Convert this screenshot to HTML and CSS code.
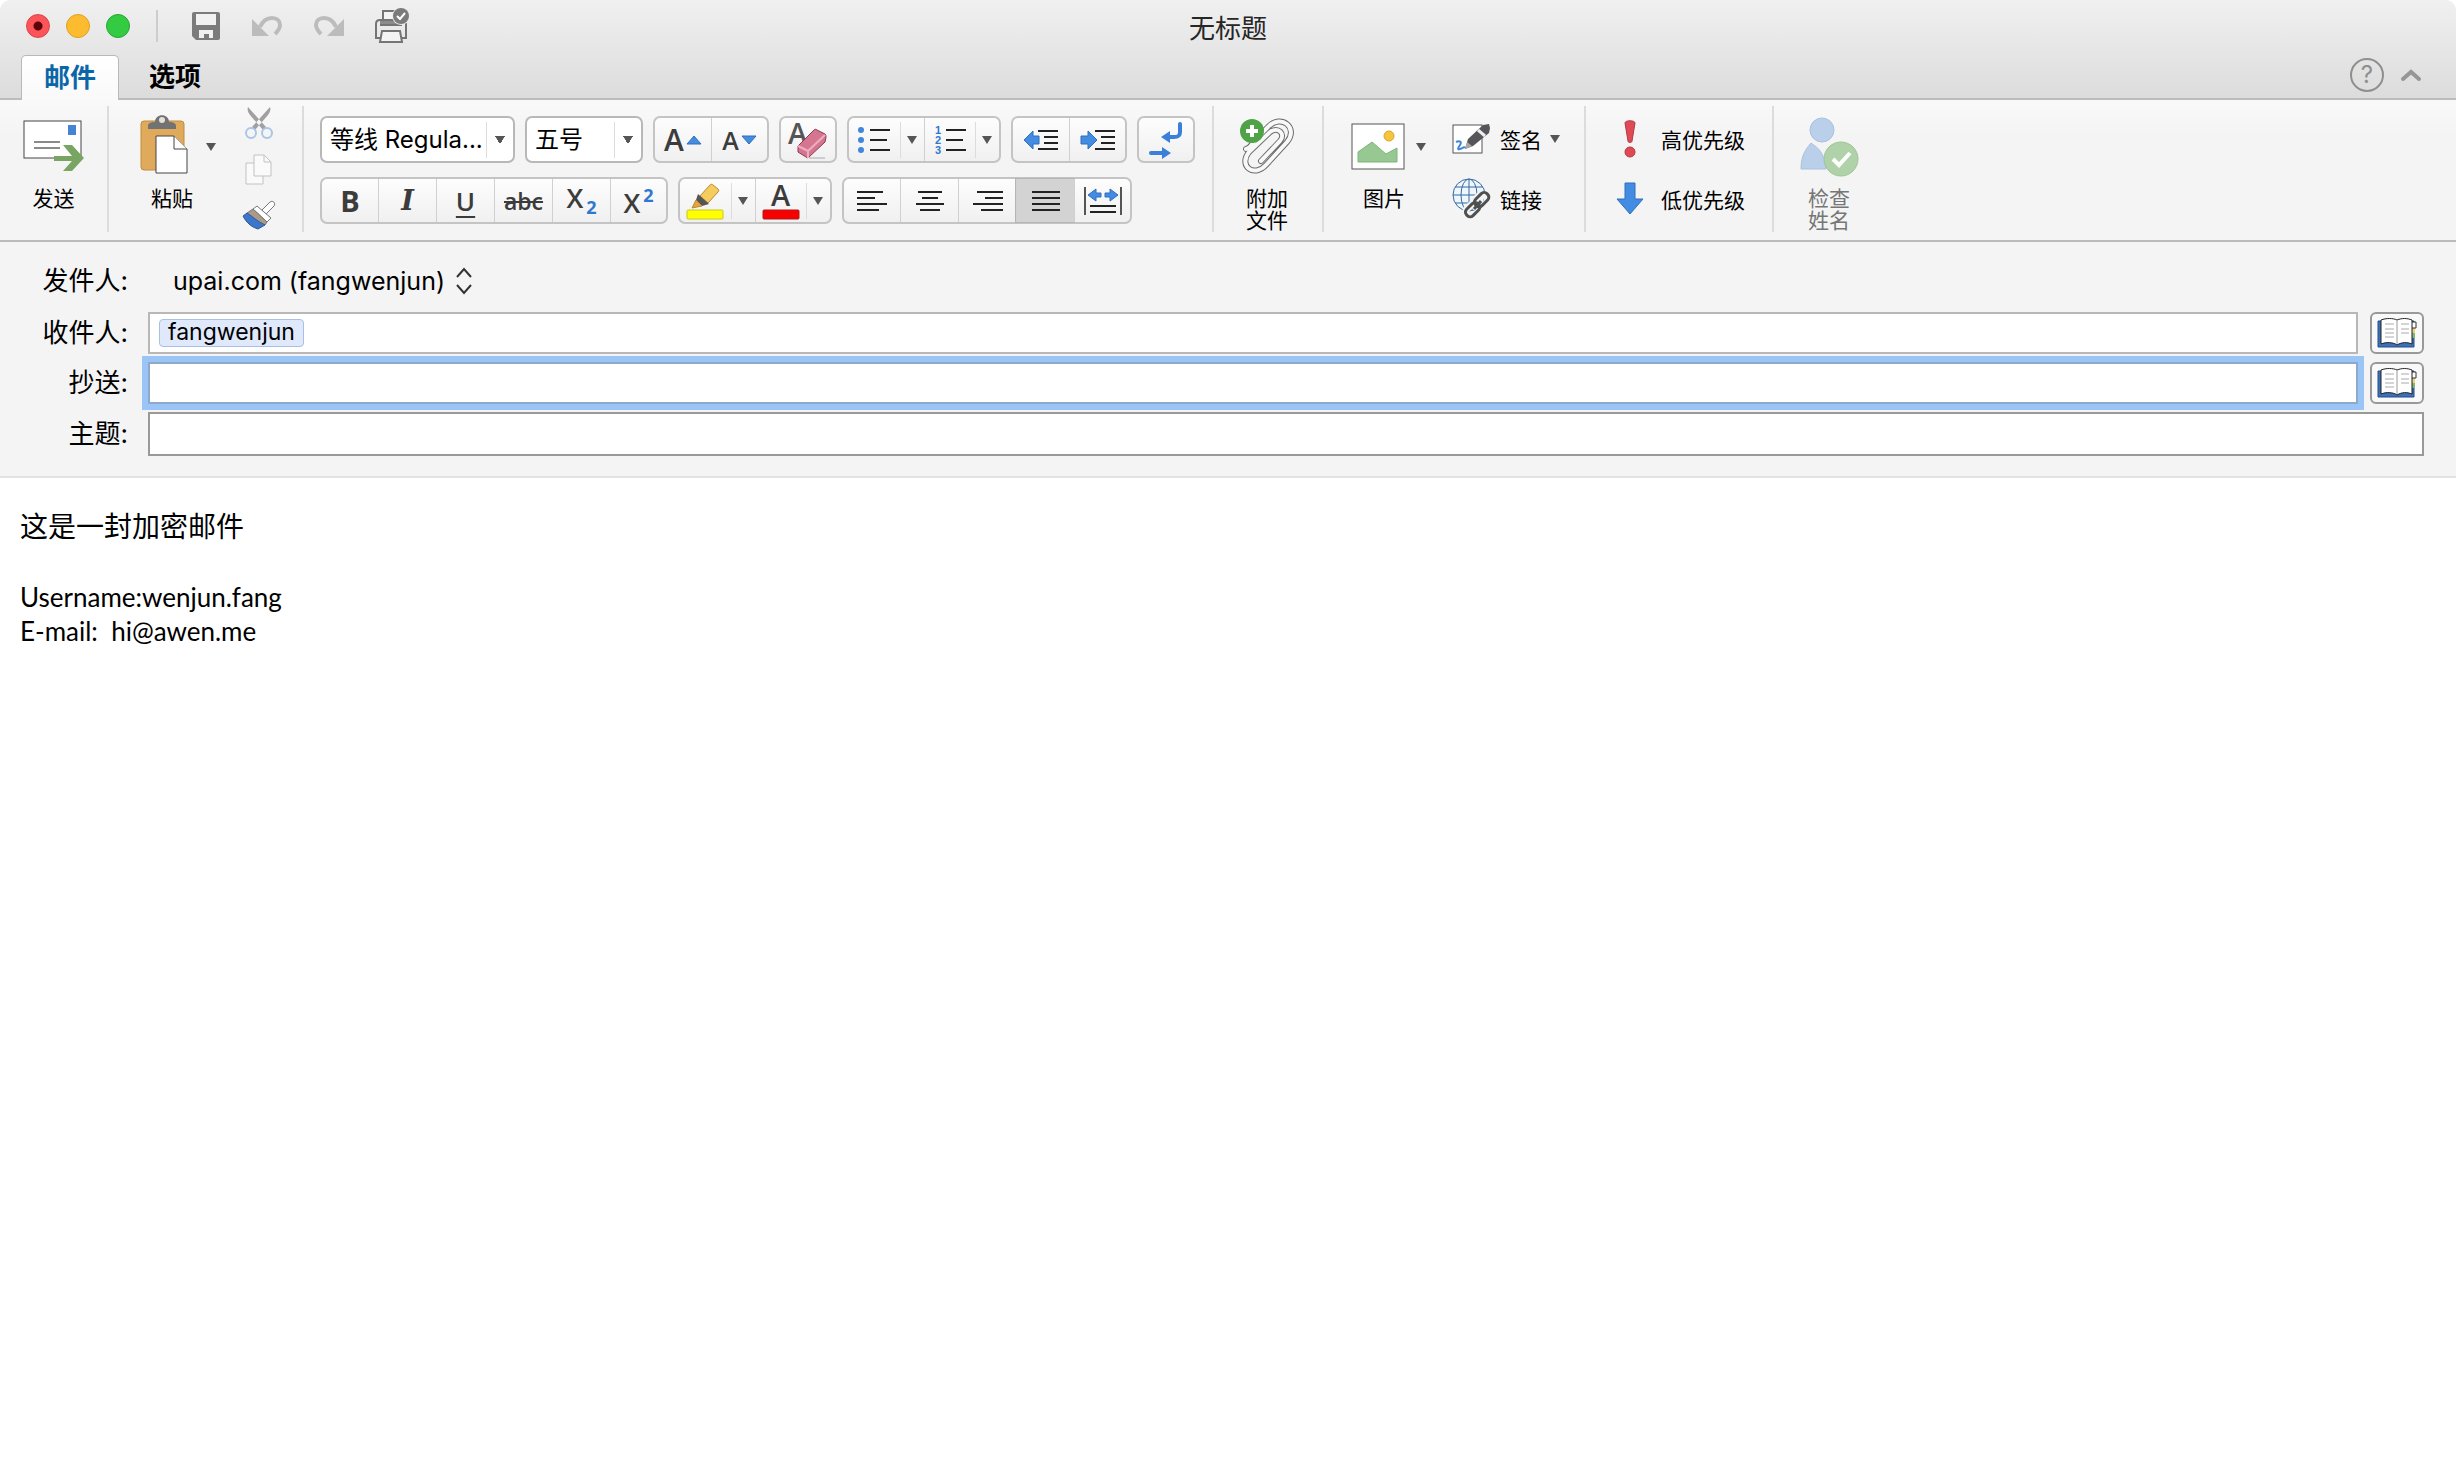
FILE: index.html
```html
<!DOCTYPE html>
<html lang="zh-CN">
<head>
<meta charset="utf-8">
<title>无标题</title>
<link rel="stylesheet" href="styles.css">
</head>
<body>
<div class="window">
<header class="chrome">
  <div class="titlebar">
    <div class="titlebar-tools">
      <div class="lights">
        <button class="light light-close" aria-label="关闭"></button>
        <button class="light light-min" aria-label="最小化"></button>
        <button class="light light-max" aria-label="最大化"></button>
      </div>
      <span class="title-sep"></span>
      <div class="quick">
        <button aria-label="保存"><svg width="30" height="30" viewBox="0 0 30 30"><path d="M3 1h24a2 2 0 0 1 2 2v24a2 2 0 0 1-2 2H5l-4-4V3a2 2 0 0 1 2-2z" fill="#7b7b7b"/><path d="M5 3h20v11H5z" fill="#f1f1f1"/><path d="M8 19h14v8h-4v-4h-5v4H8z" fill="#f1f1f1"/></svg></button>
        <button aria-label="撤销"><svg width="32" height="24" viewBox="0 0 32 24"><path d="M9 13C12 6 17 4 21 4c5 0 8 3 8 7 0 3-2 6-5 9" fill="none" stroke="#bcbcbc" stroke-width="4"/><path d="M1 5v17h17z" fill="#bcbcbc"/></svg></button>
        <button aria-label="重做"><svg width="32" height="24" viewBox="0 0 32 24"><path d="M23 13C20 6 15 4 11 4c-5 0-8 3-8 7 0 3 2 6 5 9" fill="none" stroke="#bcbcbc" stroke-width="4"/><path d="M31 5v17H14z" fill="#bcbcbc"/></svg></button>
        <button aria-label="打印"><svg width="34" height="36" viewBox="1 0 34 36"><path d="M9 12V3h14v9" fill="#f4f4f4" stroke="#757575" stroke-width="2"/><path d="M6 12h22v4H6z" fill="#8b8b8b"/><path d="M6 30H2V16c0-2 1-4 4-4h22c3 0 4 2 4 4v14h-4" fill="none" stroke="#757575" stroke-width="2"/><path d="M6 17h22" stroke="#757575" stroke-width="2"/><path d="M8 23h18l2 11H6z" fill="#f4f4f4" stroke="#757575" stroke-width="2"/><circle cx="27" cy="8" r="9" fill="#ececec"/><circle cx="27" cy="8" r="8" fill="#7b7b7b"/><path d="m23 8 3 3 5-6" fill="none" stroke="#fff" stroke-width="2"/></svg></button>
      </div>
    </div>
    <h1 class="title">无标题</h1>
    <div class="titlebar-end"></div>
  </div>
  <nav class="tabs">
    <button class="tab tab-active">邮件</button>
    <button class="tab">选项</button>
    <div class="tabs-end">
      <button class="help" aria-label="帮助">?</button>
      <button aria-label="折叠"><svg width="22" height="14" viewBox="0 0 22 14"><path d="m3 11 8-7 8 7" fill="none" stroke="#969696" stroke-width="4" stroke-linecap="round"/></svg></button>
    </div>
  </nav>
</header>

<section class="ribbon">
  <div class="group g-send">
    <button class="big"><span class="big-icon"><svg width="62" height="54" viewBox="0 0 62 54"><rect x="1" y="1" width="57" height="37" fill="#fff" stroke="#444"/><rect x="45" y="5" width="8" height="10" fill="#4484d2"/><path d="M11 22h26M11 28h26" stroke="#8a8a8a" stroke-width="2"/><path d="M31 36h18L40 25h9l12 13-12 13h-9l9-10H31z" fill="#78a662"/></svg></span><span>发送</span></button>
  </div>

  <div class="group g-paste">
    <button class="big big-left"><span class="big-icon"><svg width="48" height="60" viewBox="0 0 48 60"><rect x="1" y="7" width="43" height="49" rx="3" fill="#dfaa5c" stroke="#bd8c42"/><path d="M8 15v-3c0-3 3-4 7-4 0-9 14-9 14 0 4 0 7 1 7 4v3z" fill="#727272"/><circle cx="22" cy="6" r="3" fill="#e4e0d8"/><path d="M16 22h18l13 13v24H16z" fill="#fff" stroke="#444"/><path d="M34 22v13h13" fill="#fff" stroke="#444"/></svg></span><span>粘贴</span></button>
    <button class="drop" aria-label="粘贴选项"></button>
    <div class="clip-tools">
      <button aria-label="剪切"><svg width="30" height="34" viewBox="0 0 30 34"><path d="M4 1c-1 3 0 5 2 8l13 15 3-3zM26 1c1 3 0 5-2 8L11 24l-3-3z" fill="#a0a0a0"/><circle cx="7" cy="27" r="5" fill="none" stroke="#a9c5e8" stroke-width="2"/><circle cx="23" cy="27" r="5" fill="none" stroke="#a9c5e8" stroke-width="2"/></svg></button>
      <button aria-label="复制"><svg width="28" height="32" viewBox="0 0 28 32"><path d="M1 9h17v21H1z" fill="#fafafa" stroke="#c2c2c2"/><path d="M9 1h10l7 7v14H9z" fill="#fafafa" stroke="#c2c2c2"/><path d="M19 1v7h7" fill="none" stroke="#c2c2c2"/></svg></button>
      <button aria-label="格式刷"><svg width="34" height="30" viewBox="0 0 34 30"><path d="m20 10 8-8c3-2 6 1 4 4l-8 8z" fill="#fff" stroke="#777"/><path d="m15 6 14 12-4 4L11 9z" fill="#fff" stroke="#777"/><path d="M11 9 25 22l-2 3C16 22 12 18 5 13z" fill="#ab9a88" stroke="#777"/><path d="M5 13c6 4 11 9 18 12l-7 4C9 27 4 22 1 16z" fill="#3c77cc" stroke="#2c5aa0"/></svg></button>
    </div>
  </div>

  <div class="group g-format">
    <div class="row">
      <select class="combo combo-font" aria-label="字体"><option>等线 Regula...</option></select>
      <select class="combo combo-size" aria-label="字号"><option>五号</option></select>
      <div class="seg">
        <button class="cell grow" aria-label="增大字号"><span>A</span><svg width="16" height="10" viewBox="0 0 16 10"><path d="m1 9 7-8 7 8z" fill="#438ce2" stroke="#2f6fbd"/></svg></button>
        <button class="cell shrink" aria-label="减小字号"><span>A</span><svg width="16" height="10" viewBox="0 0 16 10"><path d="m1 1 7 8 7-8z" fill="#438ce2" stroke="#2f6fbd"/></svg></button>
      </div>
      <div class="seg">
        <button class="cell" aria-label="清除格式"><svg width="42" height="40" viewBox="0 0 42 40"><text x="1" y="24" class="glyph-a">A</text><path d="m11 26 16-16c1-1 2-1 3 0l8 4c1 1 1 2 1 3l-1 5-16 15c-1 1-2 1-3 0l-8-5z" fill="#d67590" stroke="#8b3850"/><path d="m11 26 10 5 17-16M21 31v7" fill="none" stroke="#ecafbf" stroke-width="2"/><path d="M22 38h16" stroke="#aaa"/></svg></button>
      </div>
      <div class="seg">
        <button class="cell cell-main" aria-label="项目符号"><svg width="34" height="28" viewBox="0 0 34 28"><g fill="#3f86dc"><circle cx="4" cy="4" r="3"/><circle cx="4" cy="14" r="3"/><circle cx="4" cy="24" r="3"/></g><path d="M13 4h20M13 14h17M13 24h20" stroke="#222" stroke-width="2"/></svg></button>
        <button class="cell cell-drop" aria-label="项目符号选项"></button>
        <button class="cell cell-main" aria-label="编号"><svg width="34" height="30" viewBox="0 0 34 30"><g class="digits"><text x="2" y="9">1</text><text x="2" y="19">2</text><text x="2" y="29">3</text></g><path d="M13 5h20M13 15h17M13 25h20" stroke="#222" stroke-width="2"/></svg></button>
        <button class="cell cell-drop" aria-label="编号选项"></button>
      </div>
      <div class="seg">
        <button class="cell" aria-label="减少缩进"><svg width="36" height="22" viewBox="0 0 36 22"><path d="m1 11 9-9v5h6v8h-6v5z" fill="#438ce2" stroke="#2f6fbd"/><path d="M15 2h20M21 8h14M21 14h14M15 20h20" stroke="#222" stroke-width="2"/></svg></button>
        <button class="cell" aria-label="增加缩进"><svg width="36" height="22" viewBox="0 0 36 22"><path d="m17 11-9-9v5H1v8h7v5z" fill="#438ce2" stroke="#2f6fbd"/><path d="M15 2h20M21 8h14M21 14h14M15 20h20" stroke="#222" stroke-width="2"/></svg></button>
      </div>
      <div class="seg">
        <button class="cell" aria-label="文字方向"><svg width="34" height="38" viewBox="0 0 34 38"><path d="M31 3v8c0 4-2 5-6 5h-5M2 32h13" fill="none" stroke="#3a7fd8" stroke-width="4" stroke-linecap="round"/><path d="m12 16 9-6v12zM22 32l-9-6v12z" fill="#3a7fd8"/></svg></button>
      </div>
    </div>
    <div class="row">
      <div class="seg">
        <button class="cell t-bold">B</button>
        <button class="cell t-italic">I</button>
        <button class="cell t-under">U</button>
        <button class="cell t-strike">abc</button>
        <button class="cell t-script t-sub">X<sub>2</sub></button>
        <button class="cell t-script t-sup">X<sup>2</sup></button>
      </div>
      <div class="seg">
        <button class="cell cell-main" aria-label="突出显示"><svg width="38" height="38" viewBox="0 0 38 38"><path d="M14 14 24 3c1-1 2-1 3 0l5 4c1 1 1 2 0 3L22 21z" fill="#f5cc5d" stroke="#b98a30"/><path d="m12 12 11 10-7 2-6-6z" fill="#555"/><path d="m10 18 6 6-10 2z" fill="#e8a33a" stroke="#b98a30"/><rect x="1" y="28" width="36" height="9" rx="1" fill="#ff0" stroke="#c8c820"/></svg></button>
        <button class="cell cell-drop" aria-label="突出显示选项"></button>
        <button class="cell cell-main" aria-label="字体颜色"><svg width="38" height="38" viewBox="0 0 38 38"><text x="9" y="24" class="glyph-color">A</text><rect x="1" y="28" width="36" height="9" rx="1" fill="#f60000" stroke="#b01818"/></svg></button>
        <button class="cell cell-drop" aria-label="字体颜色选项"></button>
      </div>
      <div class="seg">
        <button class="cell" aria-label="左对齐"><svg width="32" height="22" viewBox="0 0 32 22"><path d="M1 2h26M1 8h18M1 14h30M1 20h22" stroke="#222" stroke-width="2"/></svg></button>
        <button class="cell" aria-label="居中"><svg width="32" height="22" viewBox="0 0 32 22"><path d="M4 2h24M8 8h16M2 14h28M6 20h20" stroke="#222" stroke-width="2"/></svg></button>
        <button class="cell" aria-label="右对齐"><svg width="32" height="22" viewBox="0 0 32 22"><path d="M5 2h26M13 8h18M1 14h30M9 20h22" stroke="#222" stroke-width="2"/></svg></button>
        <button class="cell cell-on" aria-label="两端对齐"><svg width="32" height="22" viewBox="0 0 32 22"><path d="M2 2h28M2 8h28M2 14h28M2 20h28" stroke="#222" stroke-width="2"/></svg></button>
        <button class="cell" aria-label="分散对齐"><svg width="40" height="30" viewBox="0 0 40 30"><path d="M2 1v28M38 1v28" stroke="#555" stroke-width="2"/><path d="m5 9 8-6v4h5v4h-5v4zM35 9l-8-6v4h-5v4h5v4z" fill="#438ce2" stroke="#2f6fbd"/><path d="M7 20h26M7 26h26" stroke="#222" stroke-width="2"/></svg></button>
      </div>
    </div>
  </div>

  <div class="group g-attach">
    <button class="big"><span class="big-icon"><svg width="54" height="58" viewBox="0 0 54 58"><g fill="none" stroke-linecap="round"><path d="M6 31c5-1 6-6 11-11L28 9C41-5 59 10 47 24L26 47C14 60-2 48 9 34l21-20c8-6 16 2 10 9L21 43" stroke="#6d6d6d" stroke-width="6"/><path d="M6 31c5-1 6-6 11-11L28 9C41-5 59 10 47 24L26 47C14 60-2 48 9 34l21-20c8-6 16 2 10 9L21 43" stroke="#f8f8f8" stroke-width="4"/></g><circle cx="12" cy="13" r="12" fill="#4ea346"/><path d="M12 7v12M6 13h12" stroke="#fff" stroke-width="4"/></svg></span><span>附加<br>文件</span></button>
  </div>

  <div class="group g-insert">
    <button class="big big-left"><span class="big-icon"><svg width="54" height="48" viewBox="0 0 54 48"><rect x="1" y="1" width="52" height="45" fill="#fff" stroke="#555"/><path d="M7 39V29l14-10 14 12 11-6v14z" fill="#97c891" stroke="#7fb57a"/><circle cx="38" cy="13" r="5" fill="#f5c63c" stroke="#d7a52c"/></svg></span><span>图片</span></button>
    <button class="drop" aria-label="图片选项"></button>
    <div class="stack">
      <button class="line"><svg width="40" height="40" viewBox="0 0 40 40"><rect x="1" y="6" width="29" height="28" fill="#fff" stroke="#555"/><path d="M4 23c4-2 6 0 4 3s-3 5 0 4 4-3 5-1" fill="none" stroke="#3f86dc" stroke-width="2"/><path d="m13 30 3-10L31 6l6-1 1 4-1 5-16 13z" fill="#55555a"/><path d="m26 11 7 6" stroke="#eee" stroke-width="3"/><path d="m13 30 2-7 5 4z" fill="#aaa"/></svg>签名<span class="caret"></span></button>
      <button class="line"><svg width="40" height="42" viewBox="0 0 40 42"><g fill="#eef6ff" stroke="#376b9d"><circle cx="17" cy="17" r="16"/><ellipse cx="17" cy="17" rx="8" ry="16"/><path d="M17 1v32M1 17h32M3 9h28M3 25h28" fill="none"/></g><g fill="none" stroke="#f4f4f4" stroke-width="7"><rect x="24" y="16" width="10" height="15" rx="5" transform="rotate(45 29 23)"/><rect x="16" y="25" width="10" height="15" rx="5" transform="rotate(45 21 32)"/></g><g fill="none" stroke="#505050" stroke-width="3"><rect x="25" y="14" width="9" height="16" rx="4" transform="rotate(45 30 22)"/><rect x="16" y="24" width="9" height="16" rx="4" transform="rotate(45 21 32)"/><path d="m22 31 7-8"/></g></svg>链接</button>
    </div>
  </div>

  <div class="group g-priority">
    <div class="stack">
      <button class="line"><svg width="28" height="38" viewBox="0 0 28 38"><path d="M9 3c0-3 10-3 10 0l-3 18c0 2-4 2-4 0z" fill="#e04a55" stroke="#b03842"/><circle cx="14" cy="32" r="5" fill="#e04a55" stroke="#b03842"/></svg>高优先级</button>
      <button class="line"><svg width="28" height="34" viewBox="0 0 28 34"><path d="M9 1h10v16h8L14 32 1 17h8z" fill="#438ce2" stroke="#2f6fbd"/></svg>低优先级</button>
    </div>
  </div>

  <div class="group g-check">
    <button class="big" disabled><span class="big-icon"><svg width="58" height="60" viewBox="0 0 58 60"><g fill="#b9cfea" stroke="#a9c1e0"><circle cx="22" cy="13" r="12"/><path d="M1 52c0-14 5-20 10-26 5 4 13 7 15 26z"/></g><circle cx="41" cy="42" r="17" fill="#b0d2a8" stroke="#a0c498"/><path d="m33 42 6 6 11-12" fill="none" stroke="#fff" stroke-width="4"/></svg></span><span>检查<br>姓名</span></button>
  </div>
</section>

<form class="fields">
  <div class="field field-from">
    <label for="from">发件人:</label>
    <select id="from" class="from"><option>upai.com (fangwenjun)</option></select>
    <svg width="16" height="28" viewBox="0 0 16 28"><path d="m1 10 7-8 7 8M1 18l7 8 7-8" fill="none" stroke="#333" stroke-width="2"/></svg>
  </div>
  <div class="field">
    <label for="to">收件人:</label>
    <div class="box tokens"><span class="token">fangwenjun</span><input id="to" type="text"></div>
    <button type="button" class="book" aria-label="通讯簿"><svg width="40" height="32" viewBox="0 0 40 32"><path d="M1 4h36v26H1z" fill="#3c71b8" stroke="#254f8a"/><path d="M34 11h4v5h-4z" fill="#e8d27a"/><path d="M34 16h4v5h-4z" fill="#80b878"/><path d="M34 5h5v6h-5z" fill="#fff" stroke="#333"/><path d="M4 3c5-2 12-2 16 0 5-2 10-2 15 0v24c-5-2-10-2-15 1-4-3-11-3-16-1z" fill="#fff" stroke="#222"/><path d="M20 3v24" stroke="#999"/><path d="M8 7h9M8 12h9M8 16h9M8 20h9M24 7h8M24 12h8M24 16h8" stroke="#aaa"/></svg></button>
  </div>
  <div class="field">
    <label for="cc">抄送:</label>
    <input id="cc" class="box box-focus" type="text">
    <button type="button" class="book" aria-label="通讯簿"><svg width="40" height="32" viewBox="0 0 40 32"><path d="M1 4h36v26H1z" fill="#3c71b8" stroke="#254f8a"/><path d="M34 11h4v5h-4z" fill="#e8d27a"/><path d="M34 16h4v5h-4z" fill="#80b878"/><path d="M34 5h5v6h-5z" fill="#fff" stroke="#333"/><path d="M4 3c5-2 12-2 16 0 5-2 10-2 15 0v24c-5-2-10-2-15 1-4-3-11-3-16-1z" fill="#fff" stroke="#222"/><path d="M20 3v24" stroke="#999"/><path d="M8 7h9M8 12h9M8 16h9M8 20h9M24 7h8M24 12h8M24 16h8" stroke="#aaa"/></svg></button>
  </div>
  <div class="field">
    <label for="subject">主题:</label>
    <input id="subject" class="box box-subject" type="text">
  </div>
</form>

<main class="message" contenteditable="true" role="textbox" aria-label="正文" spellcheck="false">
  <p class="message-lead">这是一封加密邮件</p>
  <p>Username:wenjun.fang</p>
  <p>E-mail:&nbsp; hi@awen.me</p>
</main>
</div>
</body>
</html>
```

FILE: styles.css
```css
* { box-sizing: border-box; }

body {
  margin: 0;
  background: #fff;
  color: #000;
  font-family: Inter, "Noto Sans CJK SC", sans-serif;
}

button, select, input { font: inherit; color: inherit; }

button {
  margin: 0;
  padding: 0;
  border: 0;
  background: none;
}

svg { display: block; flex: none; overflow: visible; }

.window {
  display: flex;
  flex-direction: column;
  min-height: 100vh;
}

/* Title bar and tabs */
.chrome {
  background: linear-gradient(#f0f0f0, #dcdcdc);
  border-bottom: 2px solid #bcbcbc;
  border-radius: 10px 10px 0 0;
}

.titlebar {
  display: grid;
  grid-template-columns: 1fr auto 1fr;
  align-items: center;
  height: 52px;
}

.titlebar-tools { display: flex; align-items: center; padding-left: 26px; }
.lights { display: flex; gap: 16px; }

.light {
  width: 24px;
  height: 24px;
  border: 1px solid #dea123;
  border-radius: 50%;
  background: #fdbc2f;
}
.light-close { border-color: #dd4044; background: radial-gradient(circle, #5c0508 4px, #fb5559 5px); }
.light-max { border-color: #28a532; background: #32cb42; }

.title-sep { width: 2px; height: 32px; margin: 0 33px 0 26px; background: #cdcdcd; }
.quick { display: flex; align-items: center; gap: 30px; }
.title { margin: 6px 0 0; font-size: 26px; font-weight: 400; line-height: 32px; color: #262626; }

.tabs { display: flex; align-items: flex-end; height: 46px; padding: 0 34px 0 21px; }
.tab {
  height: 43px;
  padding: 0 22px;
  border-radius: 5px 5px 0 0;
  font-size: 26px;
  font-weight: 700;
  line-height: 40px;
}
.tab + .tab { margin-left: 8px; }
.tab-active {
  height: 45px;
  margin-bottom: -2px;
  border: 1px solid #b9b9b9;
  border-bottom: 0;
  background: linear-gradient(#fff, #f9f9f9);
  color: #0b66a8;
}
.tabs-end { display: flex; align-items: center; gap: 16px; margin-left: auto; padding-bottom: 6px; }
.help {
  width: 34px;
  height: 34px;
  border: 2px solid #8f8f8f;
  border-radius: 50%;
  color: #8f8f8f;
  font-size: 24px;
  line-height: 30px;
}

/* Ribbon */
.ribbon {
  display: flex;
  padding: 6px 0 8px;
  border-bottom: 2px solid #bbb;
  background: linear-gradient(#f9f9f9, #f4f4f4 36px);
}

.group { display: flex; align-items: flex-start; border-right: 2px solid #dcdcdc; }
.group:last-child { border-right: 0; }

.big {
  display: flex;
  flex-direction: column;
  align-items: center;
  font-size: 21px;
  line-height: 22px;
}
.big-left { align-items: flex-end; }
.big:disabled { color: #767676; }
.big-icon { display: flex; align-items: center; justify-content: center; height: 82px; }

.drop, .cell-drop, .caret { display: flex; align-items: center; justify-content: center; }
.drop::before, .cell-drop::before, .caret::before {
  content: "";
  border: 5px solid transparent;
  border-top: 8px solid #555;
  border-bottom: 0;
}
.drop { width: 10px; height: 82px; }

.g-send { justify-content: center; width: 109px; }
.g-paste { gap: 13px; width: 195px; padding-left: 31px; }
.g-paste .big-icon { height: 76px; margin: 0 5px 6px 0; }
.clip-tools { display: flex; flex-direction: column; align-items: center; gap: 14px; padding-left: 13px; }

.g-format { flex-direction: column; gap: 14px; width: 910px; padding: 10px 0 8px 16px; }
.row { display: flex; gap: 10px; }

.combo {
  appearance: none;
  height: 47px;
  padding: 0 30px 0 8px;
  border: 2px solid #b8b8b8;
  border-radius: 7px;
  background:
    linear-gradient(to bottom right, #555 50%, transparent 51%) right 8px center / 5px 8px no-repeat,
    linear-gradient(to bottom left, #555 50%, transparent 51%) right 13px center / 5px 8px no-repeat,
    linear-gradient(#dcdcdc, #dcdcdc) right 26px center / 1px 36px no-repeat,
    #fff;
  font-size: 24px;
}
.combo-font { width: 195px; }
.combo-size { width: 118px; }

.seg {
  display: flex;
  height: 47px;
  border: 2px solid #c4c4c4;
  border-radius: 7px;
  background: linear-gradient(#fdfdfd, #f0f0f0);
}
.cell {
  display: flex;
  align-items: center;
  justify-content: center;
  width: 58px;
  color: #3c3c3c;
}
.cell:first-child, .cell:last-child { width: 56px; }
.cell:only-child { width: 54px; }
.cell + .cell { border-left: 1px solid #d0d0d0; }
.seg .cell-main { width: 50px; }
.seg .cell-drop { width: 25px; }
.cell + .cell-drop { border-left-color: transparent; background: linear-gradient(#dcdcdc, #dcdcdc) left center / 1px 36px no-repeat; }
.cell-on { background: #d3d3d3; box-shadow: 0 0 0 1px #b5b5b5; }

.grow, .shrink { gap: 2px; font-family: "Open Sans", sans-serif; font-weight: 600; }
.grow { font-size: 30px; }
.shrink { font-size: 25px; }
.glyph-a { font: 600 29px "Open Sans", sans-serif; fill: #555; }
.glyph-color { font: 600 29px "Open Sans", sans-serif; fill: #3c3c3c; }
.digits { font: 700 11px "Liberation Sans", sans-serif; fill: #2f78cf; }

.t-bold { font: 700 29px "Open Sans", sans-serif; }
.t-italic { font: italic 700 27px "DejaVu Serif", serif; }
.t-under { font: 600 26px "Open Sans", sans-serif; text-decoration: underline; text-underline-offset: 5px; }
.t-strike { font: 600 23px "Open Sans", sans-serif; text-decoration: line-through; }
.t-script { gap: 3px; font: 600 27px "Open Sans", sans-serif; }
.t-sub { padding-bottom: 6px; }
.t-sup { padding-top: 4px; }
.t-script sub, .t-script sup { font-size: 18px; font-weight: 700; line-height: 18px; color: #2f78cf; }
.t-script sub { padding-top: 18px; }
.t-script sup { padding-bottom: 16px; }

.g-attach { justify-content: center; width: 110px; padding-right: 2px; }
.g-insert { width: 262px; padding-left: 27px; }
.g-insert .drop { margin-left: 11px; }
.g-insert .stack { padding-left: 26px; }
.g-priority { width: 188px; padding-left: 30px; }
.g-priority .line { gap: 17px; }
.g-check { padding-left: 26px; }

.stack { display: flex; flex-direction: column; padding-top: 3px; }
.line { display: flex; align-items: center; gap: 8px; height: 60px; font-size: 21px; }

/* Address fields */
.fields {
  display: flex;
  flex-direction: column;
  gap: 8px;
  padding: 16px 32px 20px 0;
  border-bottom: 2px solid #e2e2e2;
  background: #f4f4f4;
}
.field { display: flex; align-items: center; }
.field label {
  width: 128px;
  margin-right: 20px;
  font-size: 26px;
  line-height: 36px;
  text-align: right;
}
.field-from { height: 46px; }

.from {
  appearance: none;
  padding: 0;
  margin: 0 10px 0 25px;
  border: 0;
  background: none;
  font-size: 25px;
}

.box {
  flex: 1;
  min-width: 0;
  height: 42px;
  padding: 0 9px;
  border: 2px solid #b8b8b8;
  border-radius: 0;
  background: #fff;
  font-size: 23px;
  outline: 0;
}
.box-focus { border-color: #8fa9cb; box-shadow: 0 0 0 6px #9cc5f7; }
.box-subject { height: 44px; border-color: #999; }
.tokens { display: flex; align-items: center; }
.tokens input { flex: 1; border: 0; padding: 0; background: none; outline: 0; }
.token {
  height: 28px;
  padding: 0 8px;
  border: 1px solid #a9c0e4;
  border-radius: 4px;
  background: #dfe9fb;
  line-height: 25px;
}
.book {
  display: flex;
  align-items: center;
  justify-content: center;
  width: 54px;
  height: 42px;
  margin-left: 12px;
  border: 2px solid #999;
  border-radius: 6px;
  background: #f9f9f9;
}

/* Message body */
.message {
  flex: 1;
  padding: 28px 20px;
  font-family: Lato, "Noto Sans CJK SC", sans-serif;
  font-size: 26px;
  line-height: 34px;
  outline: 0;
}
.message p { margin: 0; }
.message .message-lead { margin-bottom: 34px; font-size: 28px; line-height: 40px; }
```
